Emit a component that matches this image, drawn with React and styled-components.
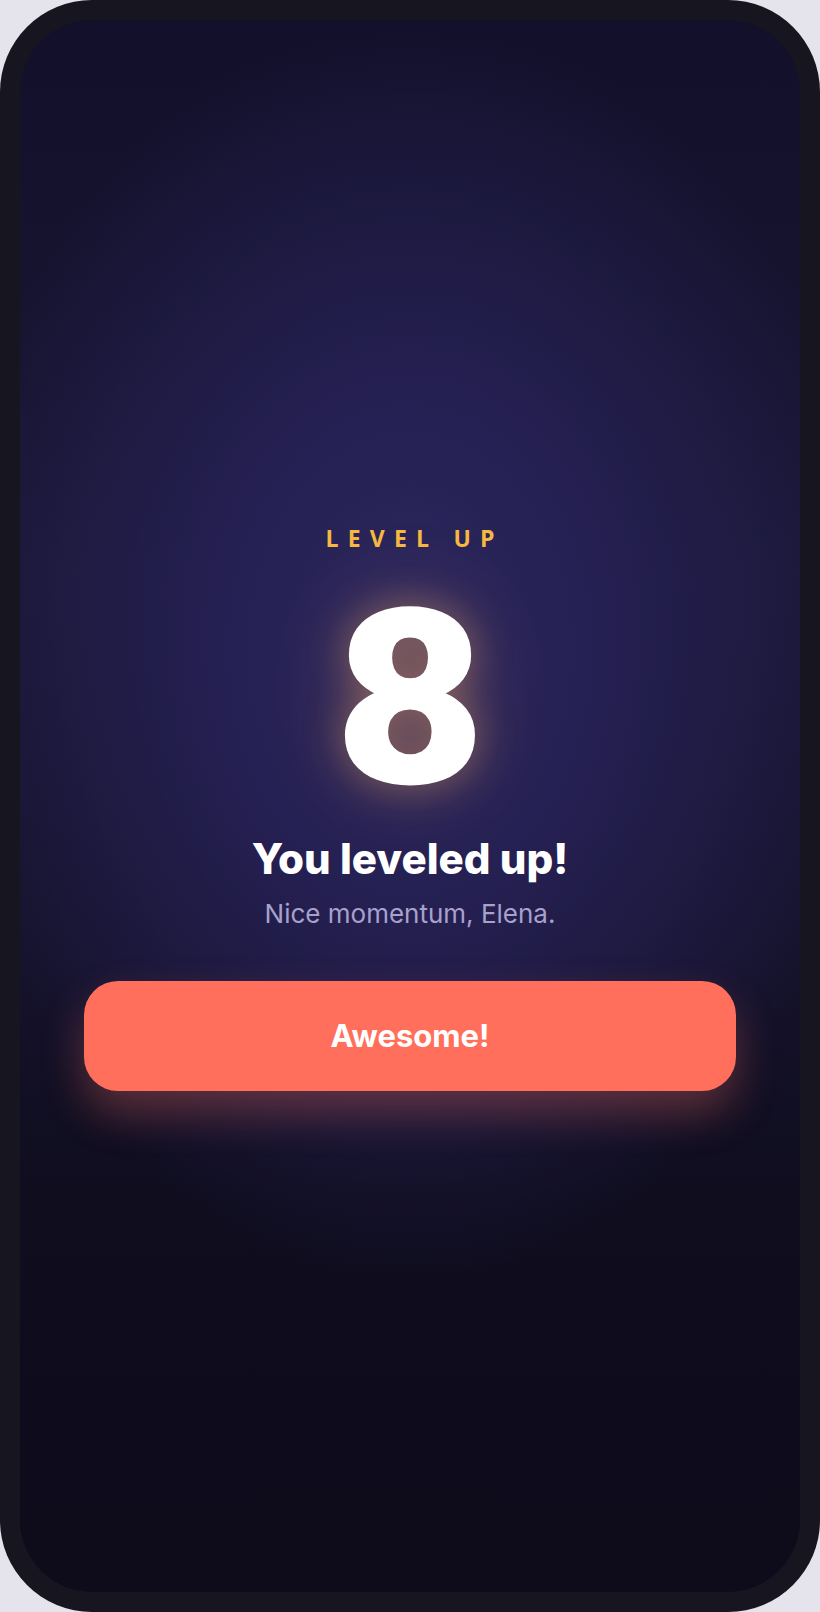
import React from 'react';
import styled, { createGlobalStyle } from 'styled-components';

const GlobalStyle = createGlobalStyle`
  html, body {
    margin: 0;
    padding: 0;
    background: #e5e3ec;
  }
  * {
    box-sizing: border-box;
  }
`;

const Frame = styled.div`
  width: 820px;
  height: 1612px;
  padding: 20px;
  border-radius: 92px;
  background: #17151f;
`;

const Screen = styled.div`
  height: 100%;
  border-radius: 72px;
  overflow: hidden;
  background:
    radial-gradient(ellipse 60% 40% at 50% 40%, #2d2860 0%, #252052 40%, rgba(20, 17, 40, 0) 100%),
    linear-gradient(180deg, #12102a 0%, #1a1735 35%, #15122b 60%, #0f0d1e 75%, #0e0c1b 100%);
  display: flex;
  flex-direction: column;
  align-items: center;
  justify-content: center;
  padding: 0 64px;
`;

const Label = styled.div`
  font-family: "Open Sans", "Liberation Sans", sans-serif;
  font-weight: 700;
  font-size: 23px;
  line-height: 1;
  letter-spacing: 0.4em;
  margin-right: -0.4em;
  margin-top: 6px;
  color: #f5b841;
`;

const LevelNumber = styled.div`
  font-family: "Roboto", "Inter", sans-serif;
  font-weight: 900;
  font-size: 245px;
  line-height: 1;
  color: #ffffff;
  margin-top: 27px;
  transform: scaleX(1.07);
  text-shadow: 0 0 40px rgba(255, 178, 100, 0.42), 0 0 90px rgba(255, 160, 80, 0.2);
`;

const Title = styled.h1`
  margin: 12px 0 0;
  font-family: "Inter", "Liberation Sans", sans-serif;
  font-weight: 800;
  font-size: 42px;
  line-height: 1.2;
  letter-spacing: 0;
  color: #ffffff;
`;

const Subtitle = styled.p`
  margin: 12px 0 0;
  font-family: "Inter", "Liberation Sans", sans-serif;
  font-weight: 400;
  font-size: 26px;
  line-height: 1.3;
  color: #a7a1cc;
`;

const ActionButton = styled.button`
  margin-top: 50px;
  width: 100%;
  height: 110px;
  border: none;
  border-radius: 34px;
  background: #ff6f5b;
  color: #ffffff;
  font-family: "Inter", "Liberation Sans", sans-serif;
  font-weight: 700;
  font-size: 31px;
  cursor: pointer;
  box-shadow: 0 22px 44px rgba(255, 111, 91, 0.3);
`;

export default function App() {
  return (
    <>
      <GlobalStyle />
      <Frame>
        <Screen>
          <Label>LEVEL UP</Label>
          <LevelNumber>8</LevelNumber>
          <Title>You leveled up!</Title>
          <Subtitle>Nice momentum, Elena.</Subtitle>
          <ActionButton>Awesome!</ActionButton>
        </Screen>
      </Frame>
    </>
  );
}
